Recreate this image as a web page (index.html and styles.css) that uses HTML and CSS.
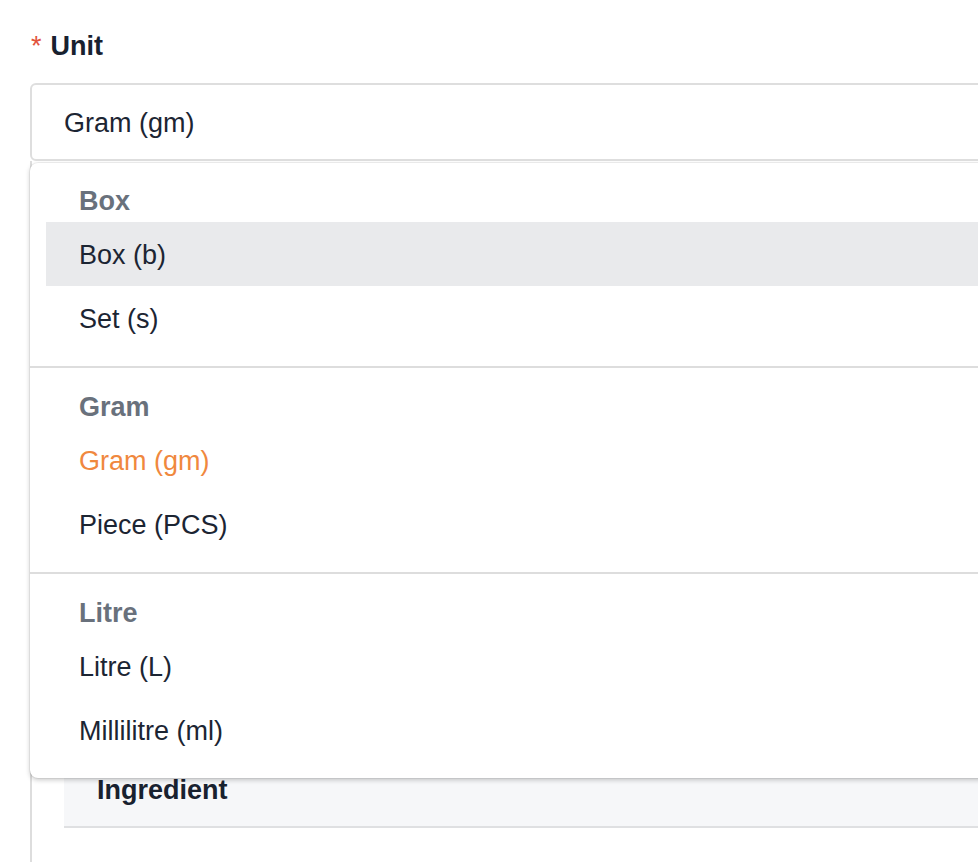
FILE: index.html
```html
<!DOCTYPE html>
<html>
<head>
<meta charset="utf-8">
<link rel="stylesheet" href="styles.css">
</head>
<body>
<div class="page">
  <div class="field">
    <div class="label"><span class="req">*</span>Unit</div>
    <div class="select">
      <div class="select-value">Gram (gm)</div>
      <div class="menu">
        <div class="group first">
          <div class="group-title">Box</div>
          <div class="option active">Box (b)</div>
          <div class="option">Set (s)</div>
        </div>
        <div class="group">
          <div class="group-title">Gram</div>
          <div class="option selected">Gram (gm)</div>
          <div class="option">Piece (PCS)</div>
        </div>
        <div class="group last">
          <div class="group-title">Litre</div>
          <div class="option">Litre (L)</div>
          <div class="option">Millilitre (ml)</div>
        </div>
      </div>
    </div>
  </div>
  <div class="card">
    <div class="card-spacer"></div>
    <div class="table">
      <div class="table-head">
        <div class="th">Ingredient</div>
      </div>
    </div>
  </div>
</div>
</body>
</html>
```
FILE: styles.css
```css
html, body {
  margin: 0;
  padding: 0;
  background: #ffffff;
  overflow: hidden;
}
body {
  font-family: "Liberation Sans", Arial, Helvetica, sans-serif;
  font-size: 27px;
  line-height: 32px;
  color: #1c2533;
}
.page {
  width: 1300px;
  padding: 30px 0 0 30px;
}
.field {
  display: flex;
  flex-direction: column;
}
.label {
  font-weight: 700;
  color: #18212f;
  display: flex;
  align-items: flex-start;
}
.req {
  color: #e2533c;
  font-weight: 400;
  margin-right: 9px;
  margin-left: 1px;
}
.select {
  position: relative;
  margin-top: 21px;
}
.select-value {
  box-sizing: border-box;
  height: 78px;
  border: 2px solid #dedede;
  border-radius: 6px;
  padding-left: 32px;
  padding-top: 2px;
  display: flex;
  align-items: center;
  color: #1c2533;
}
.menu {
  position: absolute;
  left: 0;
  right: 0;
  top: 80px;
  background: #ffffff;
  border-radius: 8px;
  box-shadow: 0 2px 5px rgba(0, 0, 0, 0.22), 0 0 0 1px rgba(0, 0, 0, 0.05);
  z-index: 10;
}
.group {
  padding: 16px 16px 16px 16px;
  border-bottom: 2px solid #dddddd;
}
.group.first {
  padding-top: 15px;
}
.group.last {
  border-bottom: none;
}
.group-title {
  box-sizing: border-box;
  height: 44px;
  padding-top: 1px;
  display: flex;
  align-items: center;
  padding-left: 33px;
  font-weight: 700;
  color: #69717c;
}
.option {
  box-sizing: border-box;
  height: 64px;
  padding-top: 1px;
  display: flex;
  align-items: center;
  padding-left: 33px;
  color: #1c2533;
}
.option.active {
  background: #e9eaec;
}
.option.selected {
  color: #f0883e;
}
.card {
  border-left: 2px solid #dddddd;
  padding-left: 32px;
  height: 720px;
}
.card-spacer {
  height: 591px;
}
.table-head {
  background: #f6f7f9;
  border-bottom: 2px solid #dfe0e2;
  padding: 22px 0 20px 33px;
}
.th {
  font-weight: 700;
  color: #18212f;
}
```
